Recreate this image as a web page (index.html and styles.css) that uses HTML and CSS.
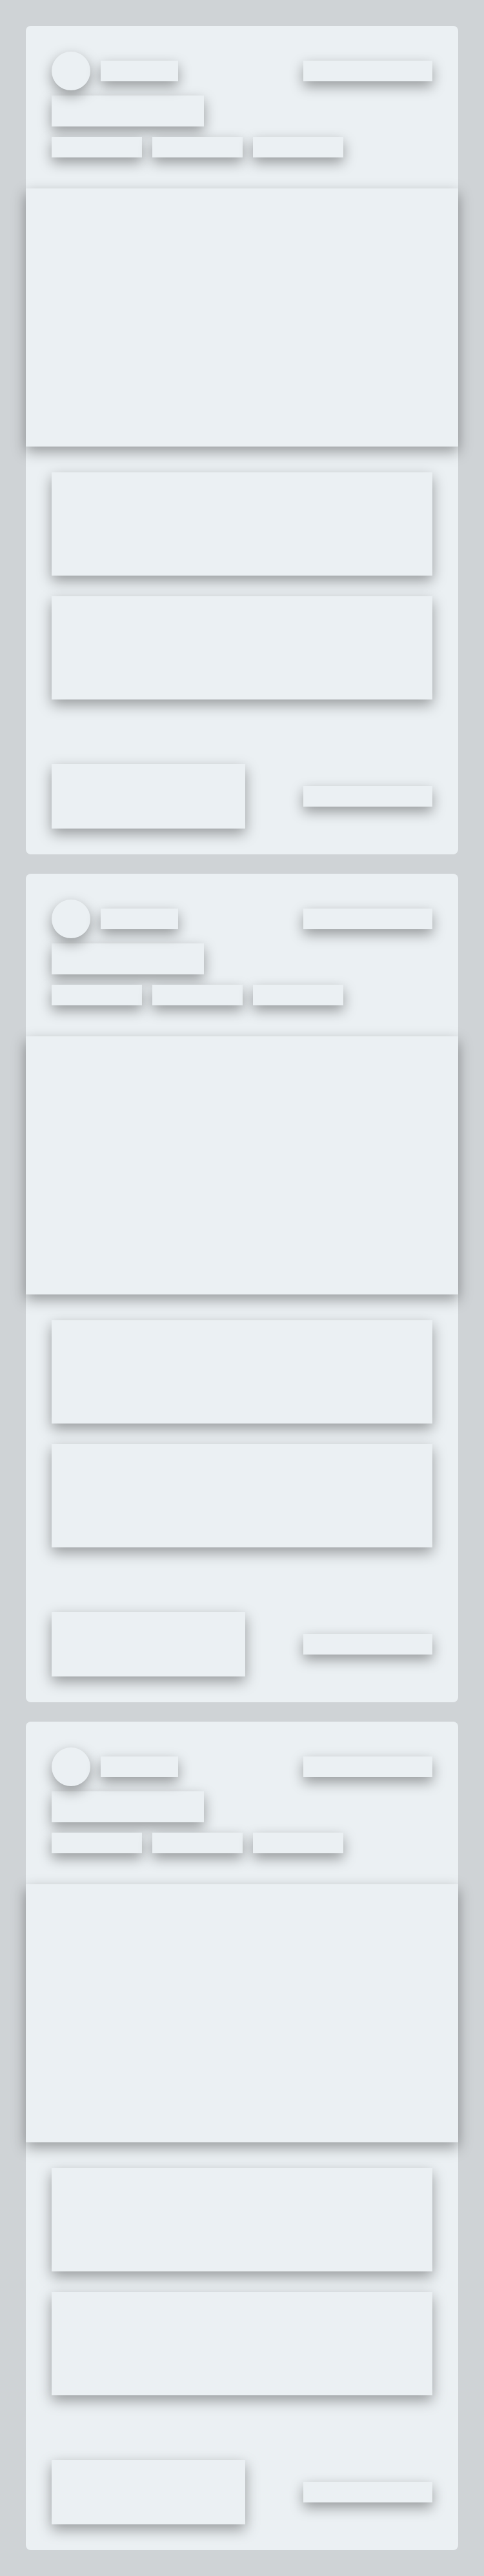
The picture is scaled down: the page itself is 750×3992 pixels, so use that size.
FILE: index.html
```html
<!DOCTYPE html>
<html lang="en">
<head>
<meta charset="utf-8">
<title>Loading</title>
<link rel="stylesheet" href="styles.css">
</head>
<body>
<main class="feed">
  <article class="card">
    <header class="card-head">
      <div class="row">
        <div class="author">
          <div class="sk avatar"></div>
          <div class="sk name"></div>
        </div>
        <div class="sk meta"></div>
      </div>
      <div class="sk title"></div>
      <div class="tags">
        <div class="sk tag"></div>
        <div class="sk tag"></div>
        <div class="sk tag"></div>
      </div>
    </header>
    <div class="sk media"></div>
    <section class="card-body">
      <div class="sk para"></div>
      <div class="sk para"></div>
      <footer class="card-foot">
        <div class="sk action"></div>
        <div class="sk meta"></div>
      </footer>
    </section>
  </article>
  <article class="card">
    <header class="card-head">
      <div class="row">
        <div class="author">
          <div class="sk avatar"></div>
          <div class="sk name"></div>
        </div>
        <div class="sk meta"></div>
      </div>
      <div class="sk title"></div>
      <div class="tags">
        <div class="sk tag"></div>
        <div class="sk tag"></div>
        <div class="sk tag"></div>
      </div>
    </header>
    <div class="sk media"></div>
    <section class="card-body">
      <div class="sk para"></div>
      <div class="sk para"></div>
      <footer class="card-foot">
        <div class="sk action"></div>
        <div class="sk meta"></div>
      </footer>
    </section>
  </article>
  <article class="card">
    <header class="card-head">
      <div class="row">
        <div class="author">
          <div class="sk avatar"></div>
          <div class="sk name"></div>
        </div>
        <div class="sk meta"></div>
      </div>
      <div class="sk title"></div>
      <div class="tags">
        <div class="sk tag"></div>
        <div class="sk tag"></div>
        <div class="sk tag"></div>
      </div>
    </header>
    <div class="sk media"></div>
    <section class="card-body">
      <div class="sk para"></div>
      <div class="sk para"></div>
      <footer class="card-foot">
        <div class="sk action"></div>
        <div class="sk meta"></div>
      </footer>
    </section>
  </article>
</main>
</body>
</html>
```
FILE: styles.css
```css
html, body {
  margin: 0;
  padding: 0;
}
body {
  background: #cfd3d6;
  font-family: "Liberation Sans", Arial, sans-serif;
}
.feed {
  display: flex;
  flex-direction: column;
  gap: 30px;
  padding: 40px;
}
.card {
  background: #ebf0f3;
  border-radius: 8px;
}
.sk {
  background: #ebf0f3;
  box-shadow: 0 8px 20px rgba(0, 0, 0, 0.36);
}
.card-head {
  padding: 40px 40px 48px;
}
.row {
  display: flex;
  align-items: center;
  justify-content: space-between;
}
.author {
  display: flex;
  align-items: center;
  gap: 16px;
}
.avatar {
  width: 60px;
  height: 60px;
  border-radius: 50%;
}
.name {
  width: 120px;
  height: 32px;
}
.meta {
  width: 200px;
  height: 32px;
}
.title {
  width: 40%;
  height: 48px;
  margin-top: 8px;
}
.tags {
  display: flex;
  gap: 16px;
  margin-top: 16px;
}
.tag {
  width: 140px;
  height: 32px;
}
.media {
  height: 400px;
}
.card-body {
  padding: 40px;
  display: flex;
  flex-direction: column;
  gap: 32px;
}
.para {
  height: 160px;
}
.card-foot {
  display: flex;
  align-items: center;
  justify-content: space-between;
  margin-top: 68px;
}
.action {
  width: 300px;
  height: 100px;
}
```
